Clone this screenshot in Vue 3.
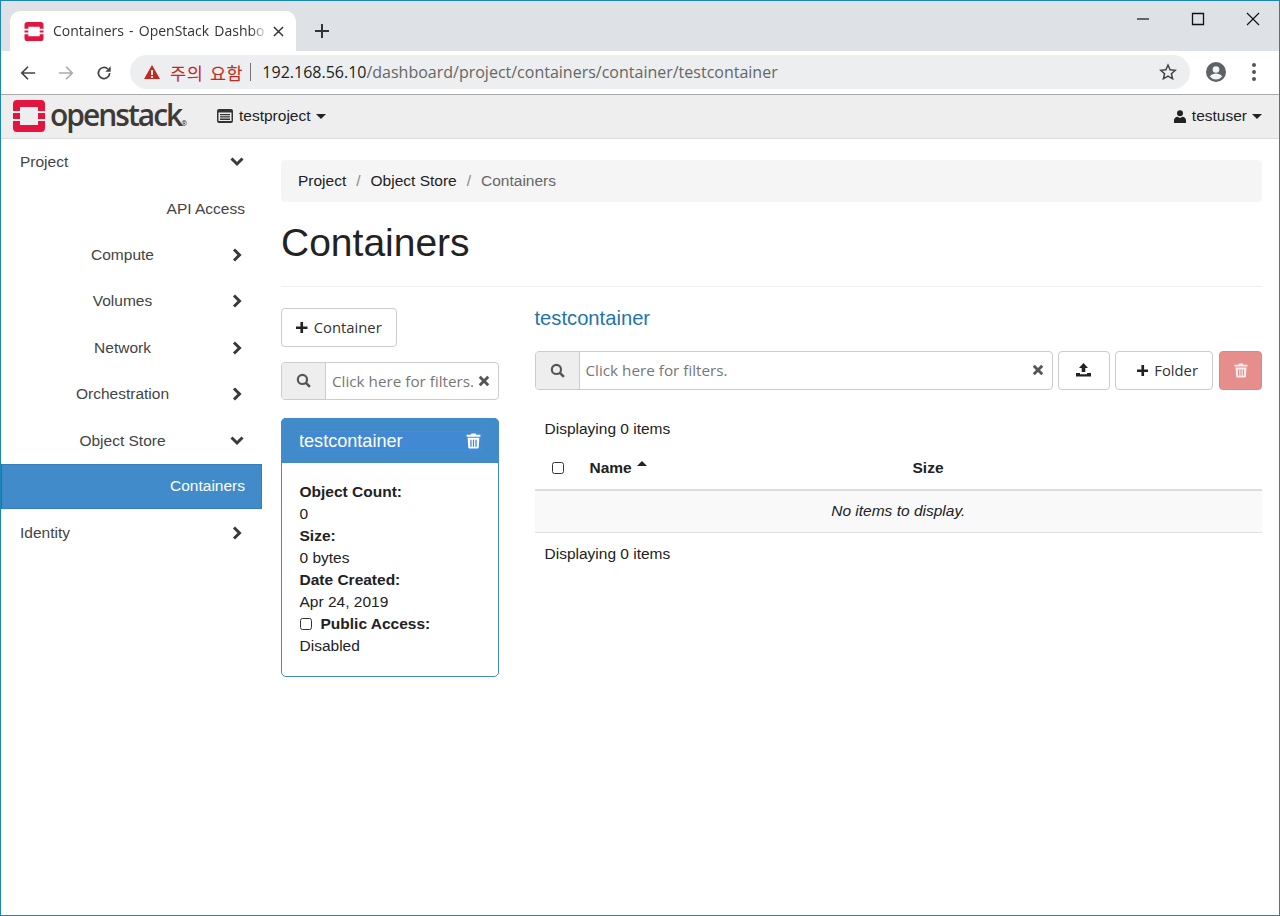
<script setup>
const items = [
  { label: 'Project', cls: 'left', icon: 'down' },
  { label: 'API Access', cls: 'right', icon: '' },
  { label: 'Compute', cls: 'center', icon: 'right' },
  { label: 'Volumes', cls: 'center', icon: 'right' },
  { label: 'Network', cls: 'center', icon: 'right' },
  { label: 'Orchestration', cls: 'center', icon: 'right' },
  { label: 'Object Store', cls: 'center', icon: 'down' },
  { label: 'Containers', cls: 'right active', icon: '' },
  { label: 'Identity', cls: 'left', icon: 'right' },
]
const facts = [
  ['Object Count:', '0'],
  ['Size:', '0 bytes'],
  ['Date Created:', 'Apr 24, 2019'],
]
const trash = 'M5 .5h4l.6 1.200H13.500v1.800H.5V1.700h3.900zM1.500 4.500h11l-.6 9.100a1 1 0 0 1-1 .9H3.100a1 1 0 0 1-1-.9zM4 6.300v6.500h1.200V6.300zm2.400 0v6.500h1.200V6.300zm2.400 0v6.500H10V6.300z'
const plus = 'M5 0h3v5h5v3H8v5H5V8H0V5h5z'
const cross = 'M3 .8 6.500 4.300 10 .8 12.200 3 8.700 6.500l3.500 3.500L10 12.200 6.500 8.700 3 12.200.8 10l3.500-3.500L.8 3z'
</script>

<template>
  <div class="window">
    <div class="tabstrip">
      <div class="tab">
        <svg class="fav" viewBox="0 0 20 20"><path fill="#e2153f" d="M3 0h14a3 3 0 0 1 3 3v4h-4V5H4v2H0V3a3 3 0 0 1 3-3zM0 9h4v2H0zm16 0h4v2h-4zM0 13h4v2h12v-2h4v4a3 3 0 0 1-3 3H3a3 3 0 0 1-3-3z"/></svg>
        <span class="tab-title">Containers - OpenStack Dashbo</span>
        <svg class="tab-x" viewBox="0 0 12 12"><path d="M1 1l10 10M11 1 1 11" stroke="#333" stroke-width="1.600" fill="none"/></svg>
      </div>
      <svg class="newtab" viewBox="0 0 14 14"><path d="M7 0v14M0 7h14" stroke="#333" stroke-width="2" fill="none"/></svg>
      <div class="winbtns">
        <svg viewBox="0 0 14 14"><path d="M1 7h12" stroke="#111" stroke-width="1.200"/></svg>
        <svg viewBox="0 0 14 14"><path d="M1.500 1.500h11v11h-11z" stroke="#111" stroke-width="1.300" fill="none"/></svg>
        <svg viewBox="0 0 14 14"><path d="M1 1l12 12M13 1 1 13" stroke="#111" stroke-width="1.200" fill="none"/></svg>
      </div>
    </div>

    <div class="toolbar">
      <svg class="tool" viewBox="0 0 18 18"><path d="M17 9H2.500M9 2 2 9l7 7" stroke="#444" stroke-width="1.900" fill="none"/></svg>
      <svg class="tool" viewBox="0 0 18 18"><path d="M1 9h14.500M9 2l7 7-7 7" stroke="#aaa" stroke-width="1.900" fill="none"/></svg>
      <svg class="tool" viewBox="0 0 18 18"><path d="M15.300 9a6.300 6.300 0 1 1-1.900-4.500" stroke="#444" stroke-width="1.900" fill="none"/><path d="M16.500 1.500v6h-6z" fill="#444"/></svg>
      <div class="omnibox">
        <svg class="warn" viewBox="0 0 16 14"><path fill="#c5281c" d="M8 0l8 14H0zM7 5v5h2V5zm0 6v2h2v-2z" fill-rule="evenodd"/></svg>
        <span class="warn-text">주의 요함</span>
        <span class="sep"></span>
        <span class="url"><b>192.168.56.10</b>/dashboard/project/containers/container/testcontainer</span>
        <svg class="star" viewBox="0 0 18 18"><path d="M9 2l2.100 4.800 5.200.5-3.900 3.400 1.200 5.100L9 13.100l-4.600 2.700 1.200-5.100-3.900-3.400 5.200-.5z" stroke="#444" stroke-width="1.500" fill="none"/></svg>
      </div>
      <svg class="avatar" viewBox="0 0 20 20"><circle cx="10" cy="10" r="10" fill="#5f6368"/><circle cx="10" cy="7.500" r="3.300" fill="#f1f3f4"/><path d="M3.800 14.500c1.500-2.300 4-3 6.200-3s4.700.7 6.200 3a8 8 0 0 1-12.400 0z" fill="#f1f3f4"/></svg>
      <div class="dots"><i></i><i></i><i></i></div>
    </div>

    <nav class="navbar">
      <svg class="logo" viewBox="0 0 32 32"><path fill="#e2153f" d="M4 0h24a4 4 0 0 1 4 4v7h-7V7H7v4H0V4a4 4 0 0 1 4-4zM0 13h7v6H0zm25 0h7v6h-7zM0 21h7v4h18v-4h7v7a4 4 0 0 1-4 4H4a4 4 0 0 1-4-4z"/></svg>
      <span class="brand">openstack<small>®</small></span>
      <span class="project">
        <svg class="proj-ico" viewBox="0 0 16 14"><path fill="#333" fill-rule="evenodd" d="M2 0h12a2 2 0 0 1 2 2v10a2 2 0 0 1-2 2H2a2 2 0 0 1-2-2V2a2 2 0 0 1 2-2zm-.500 3.500v8.500h13V3.500zM3 5h10v1.300H3zm0 2.300h10v1.300H3zm0 2.300h10v1.300H3z"/></svg>
        testproject<i class="caret"></i>
      </span>
      <span class="user">
        <svg class="user-ico" viewBox="0 0 12 13"><circle cx="6" cy="3.200" r="3" fill="#222"/><path d="M0 13v-2.800C0 8 2 6.800 3.500 6.800L6 8l2.500-1.200C10 6.800 12 8 12 10.200V13z" fill="#222"/></svg>
        testuser<i class="caret"></i>
      </span>
    </nav>

    <div class="page">
      <aside class="sidebar">
        <div v-for="it in items" :key="it.label" class="side-item" :class="it.cls">
          <span class="side-label">{{ it.label }}</span>
          <svg v-if="it.icon === 'down'" class="chev" viewBox="0 0 16 16"><path d="M2.500 4.500 8 10l5.500-5.500" stroke="#3a3a3a" stroke-width="3" fill="none"/></svg>
          <svg v-if="it.icon === 'right'" class="chev" viewBox="0 0 16 16"><path d="M5 2.500 10.500 8 5 13.500" stroke="#3a3a3a" stroke-width="3" fill="none"/></svg>
        </div>
      </aside>

      <main class="main">
        <div class="crumb">
          <span>Project</span><em>/</em><span>Object Store</span><em>/</em><span class="muted">Containers</span>
        </div>
        <h1>Containers</h1>
        <div class="columns">
          <section class="left-col">
            <button class="btn add"><svg class="ico13" viewBox="0 0 13 13"><path :d="plus" fill="#222"/></svg>Container</button>
            <div class="filter small">
              <span class="addon"><svg class="search" viewBox="0 0 14 14"><circle cx="6" cy="6" r="4.300" stroke="#555" stroke-width="2" fill="none"/><path d="M9 9l4 4" stroke="#555" stroke-width="2.400"/></svg></span>
              <span class="field">Click here for filters.</span>
              <svg class="clear" viewBox="0 0 13 13"><path :d="cross" fill="#555"/></svg>
            </div>
            <div class="card">
              <div class="card-head">
                <span class="card-title">testcontainer</span>
                <svg class="card-trash" viewBox="0 0 14 15"><path :d="trash" fill="#fff" fill-rule="evenodd"/></svg>
              </div>
              <div class="card-body">
                <template v-for="f in facts" :key="f[0]">
                  <div class="fact-key">{{ f[0] }}</div>
                  <div>{{ f[1] }}</div>
                </template>
                <div class="fact-key access"><span class="check"></span>Public Access:</div>
                <div>Disabled</div>
              </div>
            </div>
          </section>

          <section class="right-col">
            <a class="link">testcontainer</a>
            <div class="actions">
              <div class="filter wide">
                <span class="addon"><svg class="search" viewBox="0 0 14 14"><circle cx="6" cy="6" r="4.300" stroke="#555" stroke-width="2" fill="none"/><path d="M9 9l4 4" stroke="#555" stroke-width="2.400"/></svg></span>
                <span class="field">Click here for filters.</span>
                <svg class="clear" viewBox="0 0 13 13"><path :d="cross" fill="#555"/></svg>
              </div>
              <button class="btn upload"><svg class="ico15" viewBox="0 0 15 14"><path d="M7.500 0l4.500 5H9.300v4H5.700V5H3zM0 10h4v1.300h7V10h4v3.500H0z" fill="#222"/></svg></button>
              <button class="btn folder"><svg class="ico13" viewBox="0 0 13 13"><path :d="plus" fill="#222"/></svg>Folder</button>
              <button class="btn danger"><svg class="ico-del" viewBox="0 0 14 15"><path :d="trash" fill="#fff" fill-rule="evenodd"/></svg></button>
            </div>
            <div class="count">Displaying 0 items</div>
            <div class="thead">
              <span class="cell-check"><span class="check"></span></span>
              <span class="cell-name">Name<i class="caret up"></i></span>
              <span class="cell-size">Size</span>
            </div>
            <div class="empty">No items to display.</div>
            <div class="count foot">Displaying 0 items</div>
          </section>
        </div>
      </main>
    </div>
  </div>
</template>

<style>
html, body { margin: 0; background: #fff; }
</style>

<style scoped>
.window {
  width: 1280px; height: 916px; box-sizing: border-box; overflow: hidden;
  border: 1px solid #1a87b8; background: #fff; color: #222;
  font: 15.500px/22px "Liberation Sans", Arial, sans-serif;
  display: flex; flex-direction: column;
}
.tabstrip { height: 50px; flex: none; background: #dee1e6; display: flex; align-items: flex-end; position: relative; }
.tab { width: 286px; height: 40px; margin-left: 9px; background: #fff; border-radius: 10px 10px 0 0; display: flex; align-items: center; box-sizing: border-box; padding-left: 14px; }
.fav { width: 20px; height: 19px; flex: none; }
.tab-title { font: 14px "Open Sans", sans-serif; margin: -2px 0 0 9px; width: 215px; white-space: nowrap; color: #333; word-spacing: 1.500px; -webkit-mask-image: linear-gradient(90deg, #000 92%, transparent); mask-image: linear-gradient(90deg, #000 92%, transparent); }
.tab-x { width: 11px; height: 11px; margin-left: 5px; }
.newtab { width: 14px; height: 14px; margin: 0 0 13px 19px; }
.winbtns { margin-left: auto; align-self: flex-start; display: flex; gap: 41px; padding: 11px 19px 0 0; }
.winbtns svg { width: 14px; height: 14px; }
.toolbar { height: 44px; flex: none; box-sizing: border-box; border-bottom: 1px solid #aaa; display: flex; align-items: center; padding-left: 19px; background: #fff; }
.tool { width: 16px; height: 16px; margin-right: 22px; flex: none; }
.tool:nth-child(3) { margin-right: 18px; }
.omnibox { width: 1060px; height: 34px; margin-top: -2px; padding-top: 1px; border-radius: 17px; background: #eceef0; display: flex; align-items: center; padding-left: 14px; box-sizing: border-box; flex: none; }
.warn { width: 16px; height: 14px; flex: none; }
.warn-text { font: 17.500px "Noto Sans CJK KR", sans-serif; color: #c5281c; margin-left: 10px; white-space: nowrap; letter-spacing: .6px; word-spacing: 2px; }
.sep { width: 1px; height: 18px; background: #777; margin: 0 11px 0 7px; flex: none; }
.url { font: 16px "Open Sans", sans-serif; color: #666; white-space: nowrap; }
.url b { font-weight: 400; color: #222; }
.star { width: 18px; height: 18px; margin-left: auto; margin-right: 13px; flex: none; }
.avatar { width: 20px; height: 20px; margin: -2px 0 0 16px; flex: none; }
.dots { display: flex; flex-direction: column; gap: 3px; margin: -2px 0 0 26px; }
.dots i { width: 4px; height: 4px; border-radius: 50%; background: #555; }
.navbar { height: 44px; flex: none; box-sizing: border-box; background: #eee; border-bottom: 1px solid #ddd; display: flex; align-items: center; padding: 0 17px 1px 12px; }
.logo { width: 32px; height: 32px; flex: none; }
.brand { font: 600 30px/1 "Open Sans", sans-serif; color: #3f3a38; margin-left: 5px; letter-spacing: -2px; width: 137px; white-space: nowrap; transform: translateY(-1px); }
.brand small { font-size: 7px; letter-spacing: 0; }
.project { margin-left: 30px; display: flex; align-items: center; }
.proj-ico { width: 16px; height: 14px; margin-right: 6px; }
.user { margin-left: auto; display: flex; align-items: center; }
.user-ico { width: 12px; height: 13px; margin-right: 6px; }
.caret { display: inline-block; width: 0; height: 0; margin-left: 5px; border: 5px solid transparent; border-top-color: #222; border-bottom: 0; }
.caret.up { border-top: 0; border-bottom: 5px solid #222; margin-left: 5px; vertical-align: 7px; }
.page { flex: 1; display: flex; min-height: 0; }
.sidebar { width: 261px; flex: none; color: #444; }
.side-item { height: 46.400px; box-sizing: border-box; display: flex; align-items: center; padding: 0 17px 0 19px; }
.side-label { flex: 1; }
.side-item.center .side-label { text-align: center; }
.side-item.right .side-label { text-align: right; }
.side-item.active { background: #428bca; color: #fff; border: 1px solid #357ebd; border-left-color: #2f6ea5; padding-right: 16px; height: 45.400px; margin-bottom: 1px; }
.chev { width: 16px; height: 16px; flex: none; margin-left: 4px; }
.main { width: 981px; margin-left: 19px; padding-top: 21px; }
.crumb { height: 42px; background: #f5f5f5; border-radius: 4px; display: flex; align-items: center; padding-left: 17px; box-sizing: border-box; }
.crumb em { font-style: normal; color: #888; margin: 0 10px; }
.muted { color: #666; }
h1 { font-size: 39px; line-height: 44px; font-weight: 400; margin: 19px 0 21px; color: #222; height: 44px; }
.columns { border-top: 1px solid #eee; display: flex; padding-top: 21px; }
.left-col { width: 218px; flex: none; }
.right-col { width: 727.500px; margin-left: 35.500px; flex: none; }
.btn { font: 14.800px "Open Sans", sans-serif; color: #333; background: #fff; border: 1px solid #ccc; border-radius: 4px; height: 38.500px; box-sizing: border-box; padding: 0; display: flex; align-items: center; justify-content: center; }
.ico13 { width: 11.500px; height: 11.500px; margin-right: 6px; }
.add { width: 116px; }
.filter { display: flex; align-items: center; height: 38.500px; box-sizing: border-box; border: 1px solid #ccc; border-radius: 4px; background: #fff; font-family: "Open Sans", sans-serif; color: #777; }
.filter.small { margin-top: 15px; font-size: 15.250px; }
.filter.wide { width: 518px; flex: none; font-size: 15.250px; }
.addon { width: 43px; height: 100%; background: #eee; border-right: 1px solid #ccc; display: flex; align-items: center; justify-content: center; flex: none; border-radius: 3px 0 0 3px; }
.search { width: 15px; height: 15px; }
.field { flex: 1; padding-left: 6px; white-space: nowrap; overflow: hidden; }
.clear { width: 12px; height: 12px; margin-right: 8px; flex: none; }
.card { margin-top: 18px; height: 259px; box-sizing: border-box; border: 1px solid #428bca; border-radius: 5px; }
.card-head { height: 45px; margin: -1px -1px 0; background: #428bca; border-radius: 5px 5px 0 0; display: flex; align-items: center; justify-content: space-between; padding: 0 18px; color: #fff; font-size: 18.100px; }
.card-title { outline: 1px solid #3f8fdc; outline-offset: -1px; background: #4189d2; flex: 1; line-height: 20px; }
.card-trash { width: 15px; height: 16px; margin: 0 0 0 -16px; }
.card-body { padding: 18px 17.500px 0; }
.fact-key { font-weight: 700; }
.check { display: inline-block; width: 12px; height: 12px; box-sizing: border-box; border: 1px solid #333; border-radius: 2.500px; background: #fff; vertical-align: -1px; }
.access .check { margin-right: 9px; }
.link { display: block; color: #1f74ad; font-size: 20.200px; line-height: 24px; height: 24px; margin-top: -2px; }
.actions { display: flex; margin-top: 21px; gap: 5.700px; }
.upload { width: 51.500px; }
.folder { width: 98px; padding-left: 6px; }
.danger { width: 43px; background: #e58e8c; border-color: #e08481; }
.ico15 { width: 15px; height: 14px; }
.ico-del { width: 14px; height: 15px; opacity: .85; }
.count { padding-left: 10px; margin-top: 28px; }
.thead { height: 41px; margin-top: 8px; border-bottom: 2px solid #ddd; display: flex; align-items: center; font-weight: 700; box-sizing: content-box; }
.cell-check { width: 55px; padding-left: 17px; box-sizing: border-box; flex: none; }
.cell-name { width: 323px; flex: none; }
.empty { height: 41px; background: #f9f9f9; border-bottom: 1px solid #ddd; display: flex; align-items: center; justify-content: center; font-style: italic; }
.count.foot { margin-top: 10px; }
</style>
